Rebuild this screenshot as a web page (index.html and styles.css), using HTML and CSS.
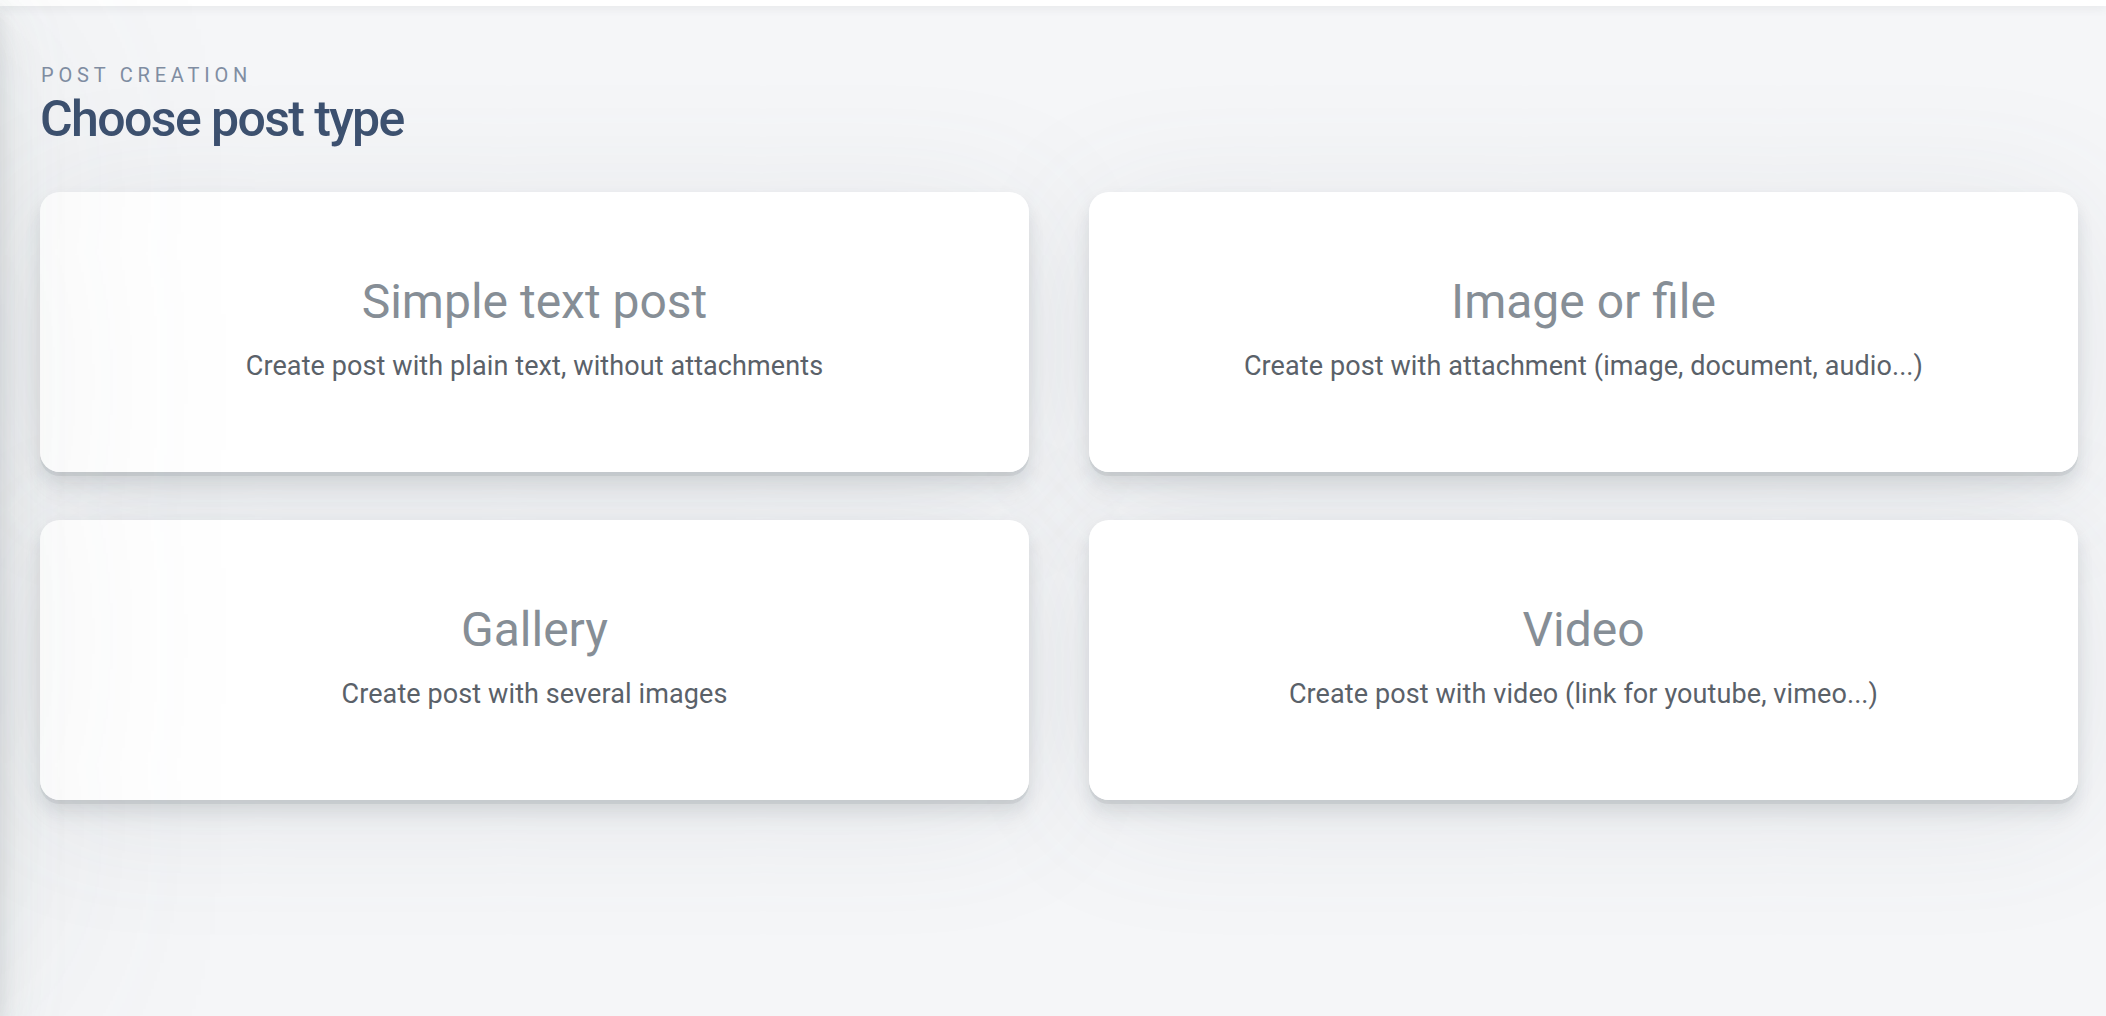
FILE: index.html
```html
<!DOCTYPE html>
<html lang="en">
<head>
<meta charset="utf-8">
<title>Choose post type</title>
<link rel="stylesheet" href="styles.css">
</head>
<body>
<div class="layout">
  <div class="sidebar-shadow"></div>
  <div class="topbar"></div>
  <main class="main">
    <header class="page-header">
      <span class="page-subtitle">Post creation</span>
      <h1 class="page-title">Choose post type</h1>
    </header>
    <section class="types">
      <a class="type-card" href="#">
        <h2 class="type-title">Simple text post</h2>
        <p class="type-desc">Create post with plain text, without attachments</p>
      </a>
      <a class="type-card" href="#">
        <h2 class="type-title">Image or file</h2>
        <p class="type-desc">Create post with attachment (image, document, audio...)</p>
      </a>
      <a class="type-card" href="#">
        <h2 class="type-title">Gallery</h2>
        <p class="type-desc">Create post with several images</p>
      </a>
      <a class="type-card" href="#">
        <h2 class="type-title">Video</h2>
        <p class="type-desc">Create post with video (link for youtube, vimeo...)</p>
      </a>
    </section>
  </main>
</div>
</body>
</html>
```
FILE: styles.css
```css
html, body {
  margin: 0;
  padding: 0;
  height: 100%;
}
body {
  background: #f5f6f8;
  font-family: Roboto, "Noto Sans", "Liberation Sans", sans-serif;
  color: #5a6169;
  overflow: hidden;
}
.layout {
  position: relative;
  min-height: 100%;
  overflow: hidden;
}
.sidebar-shadow {
  position: absolute;
  top: 0;
  left: -400px;
  width: 400px;
  height: 100%;
  z-index: 5;
  box-shadow: 0 4px 300px rgba(90, 97, 105, 0.12),
              0 8px 16px rgba(90, 97, 105, 0.12),
              0 30px 44px rgba(90, 97, 105, 0.1),
              0 14px 70px rgba(165, 182, 171, 0.1);
}
.topbar {
  position: relative;
  z-index: 4;
  height: 6px;
  background: #ffffff;
  box-shadow: 0 2px 10px rgba(90, 97, 105, 0.12);
}
.main {
  padding: 0 28px 0 40px;
}
.page-header {
  display: flex;
  flex-direction: column;
  padding-top: 57px;
  margin-bottom: 48px;
}
.page-subtitle {
  font-size: 20px;
  line-height: 24px;
  letter-spacing: 4.8px;
  text-transform: uppercase;
  color: #818ea3;
  margin-bottom: 7px;
  padding-left: 1px;
}
.page-title {
  margin: 0;
  font-size: 50px;
  line-height: 50px;
  font-weight: 500;
  letter-spacing: -1.6px;
  color: #3d5170;
}
.types {
  display: grid;
  grid-template-columns: 1fr 1fr;
  column-gap: 60px;
  row-gap: 48px;
  isolation: isolate;
}
.type-card {
  position: relative;
  height: 280px;
  box-sizing: border-box;
  padding-bottom: 4px;
  display: flex;
  flex-direction: column;
  align-items: center;
  justify-content: center;
  background: #ffffff;
  border-radius: 20px;
  text-decoration: none;
}
.type-card::before {
  content: "";
  position: absolute;
  inset: 0;
  z-index: -1;
  border-radius: inherit;
  box-shadow: 0 4px 0 rgba(90, 97, 105, 0.11),
              0 8px 16px rgba(90, 97, 105, 0.12),
              0 20px 20px rgba(90, 97, 105, 0.06),
              0 14px 140px rgba(90, 97, 105, 0.1);
}
.type-title {
  margin: 0 0 15px;
  font-size: 48px;
  line-height: 57.6px;
  font-weight: 400;
  color: #868e96;
}
.type-desc {
  margin: 0;
  font-size: 27px;
  line-height: 40.5px;
  letter-spacing: 0.1px;
  color: #5a6169;
}
```
